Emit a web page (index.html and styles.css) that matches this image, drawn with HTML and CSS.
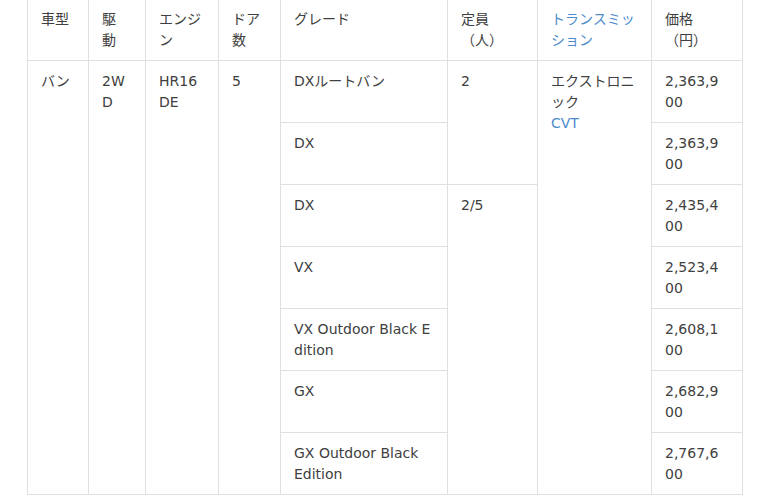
FILE: index.html
```html
<!DOCTYPE html>
<html lang="ja">
<head>
<meta charset="utf-8">
<link rel="stylesheet" href="styles.css">
</head>
<body>
<table class="spec">
  <colgroup>
    <col class="c-type"><col class="c-drive"><col class="c-engine"><col class="c-door">
    <col class="c-grade"><col class="c-cap"><col class="c-trans"><col class="c-price">
  </colgroup>
  <thead>
    <tr>
      <th>車型</th>
      <th>駆動</th>
      <th>エンジン</th>
      <th>ドア数</th>
      <th>グレード</th>
      <th>定員（人）</th>
      <th><span class="link">トランスミッション</span></th>
      <th>価格（円）</th>
    </tr>
  </thead>
  <tbody>
    <tr>
      <td rowspan="7">バン</td>
      <td rowspan="7">2WD</td>
      <td rowspan="7">HR16DE</td>
      <td rowspan="7">5</td>
      <td>DXルートバン</td>
      <td rowspan="2">2</td>
      <td rowspan="7">エクストロニック<br><span class="link">CVT</span></td>
      <td>2,363,900</td>
    </tr>
    <tr>
      <td>DX</td>
      <td>2,363,900</td>
    </tr>
    <tr>
      <td>DX</td>
      <td rowspan="5">2/5</td>
      <td>2,435,400</td>
    </tr>
    <tr>
      <td>VX</td>
      <td>2,523,400</td>
    </tr>
    <tr>
      <td>VX&nbsp;Outdoor&nbsp;Black&nbsp;Edition</td>
      <td>2,608,100</td>
    </tr>
    <tr>
      <td>GX</td>
      <td>2,682,900</td>
    </tr>
    <tr>
      <td>GX Outdoor Black Edition</td>
      <td>2,767,600</td>
    </tr>
  </tbody>
</table>
</body>
</html>
```
FILE: styles.css
```css
html, body {
  margin: 0;
  padding: 0;
  background: #ffffff;
}

body {
  font-family: "DejaVu Sans", "Noto Sans CJK JP", sans-serif;
  font-size: 14px;
  line-height: 21px;
  color: #404040;
}

.spec {
  border-collapse: collapse;
  table-layout: fixed;
  width: 716px;
  margin: -2px 0 0 27px;
}

.c-type { width: 61px; }
.c-drive { width: 57px; }
.c-engine { width: 73px; }
.c-door { width: 62px; }
.c-grade { width: 167px; }
.c-cap { width: 90px; }
.c-trans { width: 114px; }
.c-price { width: 91px; }

.spec th,
.spec td {
  border: 1px solid #e0e0e0;
  padding: 10px 16px 9px 13px;
  text-align: left;
  vertical-align: top;
  font-weight: normal;
  overflow-wrap: break-word;
}

.link {
  color: #4d8bcb;
}
```
